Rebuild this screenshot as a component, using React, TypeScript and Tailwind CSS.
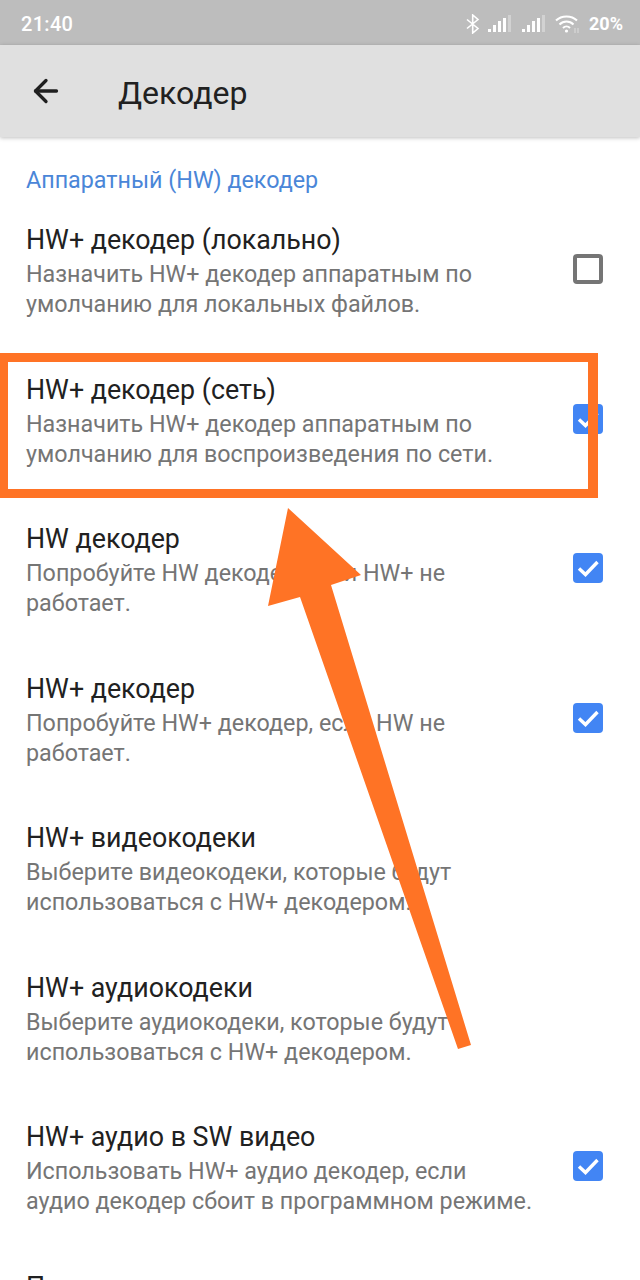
import { ArrowLeft } from 'lucide-react';

type Setting = {
  title: string;
  lines: string[];
  checked?: boolean;
};

const settings: Setting[] = [
  {
    title: 'HW+ декодер (локально)',
    lines: ['Назначить HW+ декодер аппаратным по', 'умолчанию для локальных файлов.'],
    checked: false,
  },
  {
    title: 'HW+ декодер (сеть)',
    lines: ['Назначить HW+ декодер аппаратным по', 'умолчанию для воспроизведения по сети.'],
    checked: true,
  },
  {
    title: 'HW декодер',
    lines: ['Попробуйте HW декодер, если HW+ не', 'работает.'],
    checked: true,
  },
  {
    title: 'HW+ декодер',
    lines: ['Попробуйте HW+ декодер, если HW не', 'работает.'],
    checked: true,
  },
  {
    title: 'HW+ видеокодеки',
    lines: ['Выберите видеокодеки, которые будут', 'использоваться с HW+ декодером.'],
  },
  {
    title: 'HW+ аудиокодеки',
    lines: ['Выберите аудиокодеки, которые будут', 'использоваться с HW+ декодером.'],
  },
  {
    title: 'HW+ аудио в SW видео',
    lines: ['Использовать HW+ аудио декодер, если', 'аудио декодер сбоит в программном режиме.'],
    checked: true,
  },
  {
    title: 'Показывать',
    lines: [],
  },
];

function SignalIcon() {
  return (
    <svg width="24" height="18" viewBox="0 0 24 18">
      <rect x="0" y="14" width="3" height="3" fill="#fff" />
      <rect x="5" y="10" width="3" height="7" fill="#fff" />
      <rect x="10" y="6" width="3" height="11" fill="#fff" />
      <rect x="15" y="3" width="3" height="14" fill="#fff" />
      <rect x="20" y="0" width="3" height="17" fill="#d2d2d2" />
    </svg>
  );
}

function StatusBar() {
  return (
    <div className="flex h-[45px] shrink-0 items-center justify-between bg-[#bdbdbd] pl-[21px] pr-[17px] pt-[2px] text-white">
      <span className="text-[20px] font-medium tracking-[0.3px]">21:40</span>
      <div className="flex items-center">
        <svg width="14" height="20" viewBox="0 0 14 20" fill="none" stroke="#fff" strokeWidth="1.6">
          <path d="M1 5.5 12 14.5 6.7 19V1L12 5.5 1 14.5" />
        </svg>
        <div className="ml-[8px]">
          <SignalIcon />
        </div>
        <div className="ml-[10px]">
          <SignalIcon />
        </div>
        <svg className="ml-[9px]" width="25" height="20" viewBox="0 0 25 20" fill="none" stroke="#fff" strokeWidth="2">
          <path d="M1 6.5C6.5 1 16.5 1 22 6.5" />
          <path d="M4.5 10.5C8.5 6.5 14.5 6.5 18.5 10.5" />
          <path d="M8 14C10 12 13 12 15 14" />
          <circle cx="11.5" cy="17" r="1.6" fill="#fff" stroke="none" />
          <path d="M20 14v5M23 14v5" stroke="#d8d8d8" strokeWidth="1.2" />
        </svg>
        <span className="ml-[9px] text-[18px] font-bold">20%</span>
      </div>
    </div>
  );
}

function Toolbar() {
  return (
    <div className="relative flex h-[92px] shrink-0 items-center bg-[#e0e0e0] shadow-[0_1px_4px_rgba(0,0,0,0.25)]">
      <ArrowLeft className="ml-[28px] text-[#1f1f1f]" size={36} strokeWidth={2.2} />
      <span className="ml-[54px] mt-[3px] text-[32px] text-[#212121]">Декодер</span>
    </div>
  );
}

function Checkbox({ checked }: { checked: boolean }) {
  if (!checked) {
    return <div className="h-[30px] w-[30px] rounded-[4px] border-[4px] border-[#757575]" />;
  }
  return (
    <div className="flex h-[30px] w-[30px] items-center justify-center rounded-[4px] bg-[#4285f4]">
      <svg width="24" height="20" viewBox="0 0 24 20" fill="none" stroke="#fff" strokeWidth="3.4">
        <path d="M3 10.5 9.5 16.5 21.5 4" />
      </svg>
    </div>
  );
}

function SettingRow({ title, lines, checked }: Setting) {
  return (
    <div className="flex h-[149.5px] shrink-0 items-start justify-between pl-[26px] pr-[37px]">
      <div>
        <div className="text-[26.8px] leading-[34px] text-[#212121]">{title}</div>
        <div className="mt-[2px] text-[23.3px] leading-[30px] text-[#757575]">
          {lines.map((line) => (
            <div key={line} className="whitespace-nowrap">
              {line}
            </div>
          ))}
        </div>
      </div>
      {checked !== undefined && (
        <div className="mt-[31px]">
          <Checkbox checked={checked} />
        </div>
      )}
    </div>
  );
}

function Annotation() {
  return (
    <>
      <div className="absolute left-0 top-[353px] h-[145px] w-[598px] border-y-[9px] border-l-[8px] border-r-[10px] border-[#ff7325]" />
      <svg className="absolute left-0 top-0" width="640" height="1280" viewBox="0 0 640 1280">
        <polygon
          points="288,508 361,575 331,585 471,1045 458,1049 300,597 268,606"
          fill="#ff7325"
        />
      </svg>
    </>
  );
}

export default function App() {
  return (
    <div
      className="relative flex h-[1280px] w-[640px] flex-col overflow-hidden bg-white"
      style={{ fontFamily: 'Roboto, sans-serif' }}
    >
      <StatusBar />
      <Toolbar />
      <div className="shrink-0 pl-[26px] pt-[28px] text-[23.3px] leading-[30px] text-[#4a86d8]">
        Аппаратный (HW) декодер
      </div>
      <div className="mt-[28px] flex flex-col">
        {settings.map((item) => (
          <SettingRow key={item.title} {...item} />
        ))}
      </div>
      <Annotation />
    </div>
  );
}
